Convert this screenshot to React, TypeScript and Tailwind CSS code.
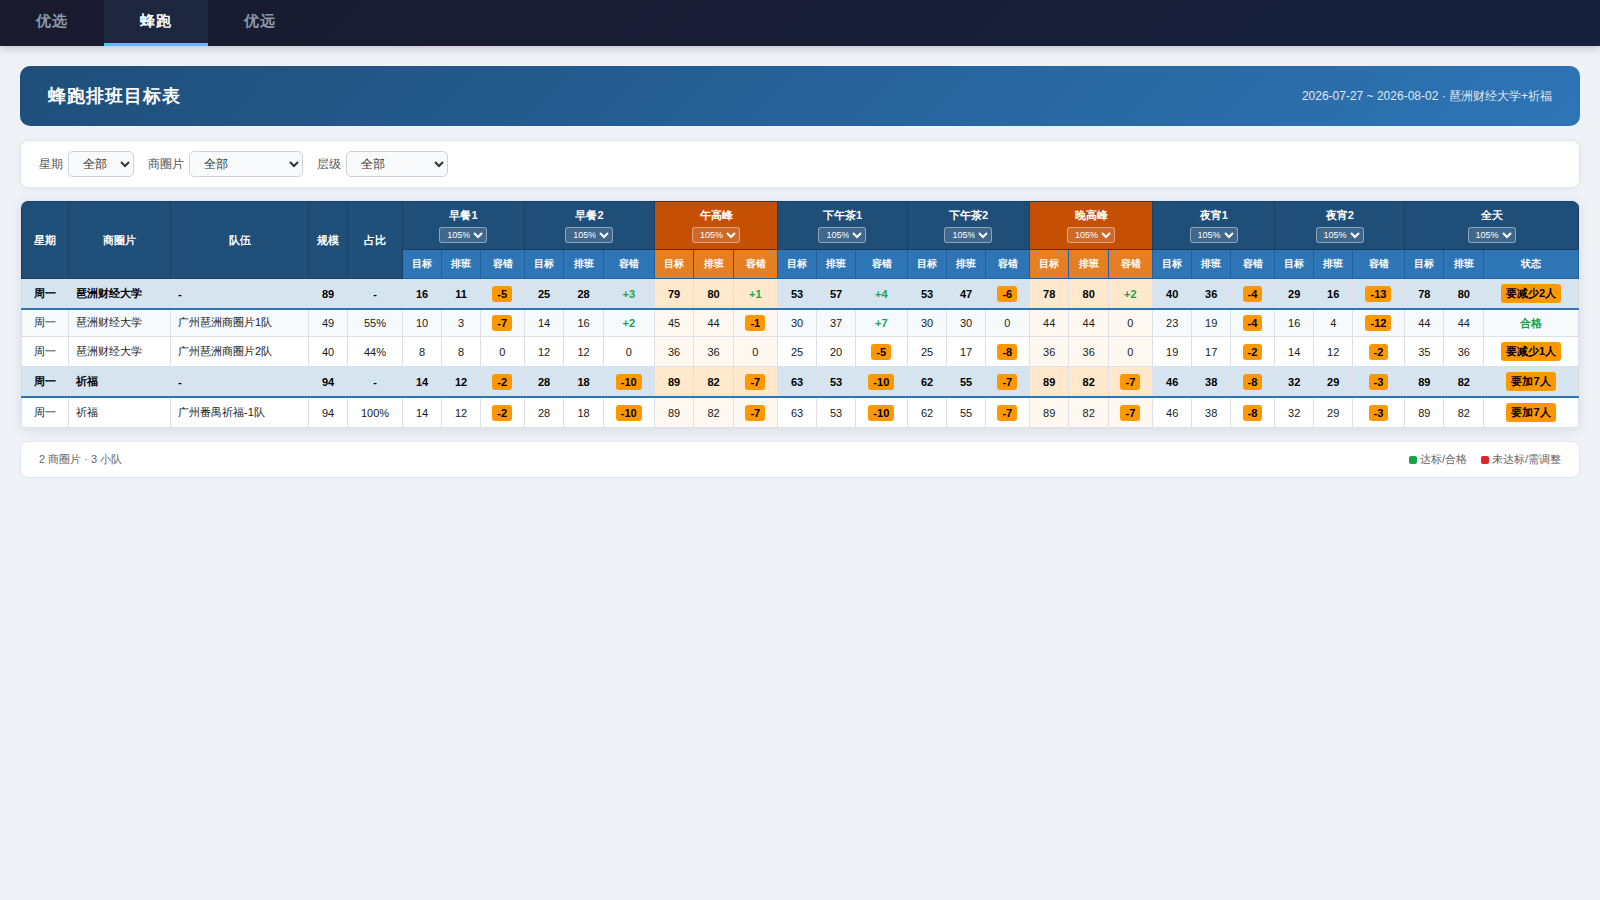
import React, { useState } from 'react';

type Cell = [number, number, number];

interface Row {
  day: string;
  area: string;
  team: string;
  size: number;
  ratio: string;
  slots: Cell[];
  total: [number, number];
  status: string;
  summary?: boolean;
  striped?: boolean;
}

const TABS = ['优选', '蜂跑', '优远'];

const SLOTS = ['早餐1', '早餐2', '午高峰', '下午茶1', '下午茶2', '晚高峰', '夜宵1', '夜宵2'];

const PEAK = [2, 5];

const COL_WIDTHS = [
  47, 102, 138, 39, 55,
  39, 39, 44,
  39, 40, 51,
  39, 40, 44,
  39, 39, 52,
  39, 39, 44,
  39, 40, 44,
  39, 39, 44,
  39, 39, 52,
  39, 40, 95,
];

const ROWS: Row[] = [
  {
    day: '周一', area: '琶洲财经大学', team: '-', size: 89, ratio: '-', summary: true,
    slots: [[16, 11, -5], [25, 28, 3], [79, 80, 1], [53, 57, 4], [53, 47, -6], [78, 80, 2], [40, 36, -4], [29, 16, -13]],
    total: [78, 80], status: '要减少2人',
  },
  {
    day: '周一', area: '琶洲财经大学', team: '广州琶洲商圈片1队', size: 49, ratio: '55%', striped: true,
    slots: [[10, 3, -7], [14, 16, 2], [45, 44, -1], [30, 37, 7], [30, 30, 0], [44, 44, 0], [23, 19, -4], [16, 4, -12]],
    total: [44, 44], status: '合格',
  },
  {
    day: '周一', area: '琶洲财经大学', team: '广州琶洲商圈片2队', size: 40, ratio: '44%',
    slots: [[8, 8, 0], [12, 12, 0], [36, 36, 0], [25, 20, -5], [25, 17, -8], [36, 36, 0], [19, 17, -2], [14, 12, -2]],
    total: [35, 36], status: '要减少1人',
  },
  {
    day: '周一', area: '祈福', team: '-', size: 94, ratio: '-', summary: true,
    slots: [[14, 12, -2], [28, 18, -10], [89, 82, -7], [63, 53, -10], [62, 55, -7], [89, 82, -7], [46, 38, -8], [32, 29, -3]],
    total: [89, 82], status: '要加7人',
  },
  {
    day: '周一', area: '祈福', team: '广州番禺祈福-1队', size: 94, ratio: '100%',
    slots: [[14, 12, -2], [28, 18, -10], [89, 82, -7], [63, 53, -10], [62, 55, -7], [89, 82, -7], [46, 38, -8], [32, 29, -3]],
    total: [89, 82], status: '要加7人',
  },
];

const ROW_HEIGHTS = ['h-[30px]', 'h-[28px]', 'h-[30px]', 'h-[30px]', 'h-[31px]'];

const NUM_PADDING = ['pt-px', 'pt-0', 'pt-0', 'pt-px', 'pt-px'];

const Filter: React.FC<{ label: string; width: string }> = ({ label, width }) => (
  <label className="flex items-center gap-[5px] text-xs text-[#555]">
    {label}
    <select className={`${width} h-[26px] rounded-[5px] border border-[#ccd3e0] bg-[#f9fafc] px-2.5 text-xs text-[#333]`}>
      <option>全部</option>
    </select>
  </label>
);

const RateSelect: React.FC = () => (
  <div className="mt-[5px] flex h-4 justify-center pr-[0.4px]">
    <select className="h-4 w-12 rounded-[3px] border border-white/40 bg-white/15 pr-0 pl-[3px] text-[9px] leading-normal font-normal text-white">
      <option>105%</option>
    </select>
  </div>
);

const Badge: React.FC<{ children: React.ReactNode }> = ({ children }) => (
  <span className="inline-block rounded-[3px] bg-[#ff9800] px-[5px] py-0.5 align-middle font-bold text-black">{children}</span>
);

const Diff: React.FC<{ value: number }> = ({ value }) => {
  if (value < 0) return <Badge>{value}</Badge>;
  if (value > 0) return <span className="font-bold text-[#16a34a]">+{value}</span>;
  return <>0</>;
};

const App: React.FC = () => {
  const [tab, setTab] = useState('蜂跑');

  const headCell = 'border border-[#1a3f62] bg-[#1f4e79] p-0 font-bold';

  return (
    <div className="min-h-screen bg-[#eef1f6] font-['Liberation_Sans',sans-serif] text-[#1a1a1a]">
      <nav className="relative flex h-[46px] bg-[linear-gradient(135deg,#1a1a2e,#16213e)] shadow-[0_2px_8px_rgba(0,0,0,0.2)]">
        {TABS.map((name) => (
          <button
            key={name}
            onClick={() => setTab(name)}
            className={`h-[46px] w-[104px] border-b-[3px] text-[15px] font-bold tracking-[1px] ${
              tab === name ? 'border-[#4fc3f7] bg-[#4fc3f7]/8 text-white' : 'border-transparent text-[#8899aa]'
            }`}
          >
            {name}
          </button>
        ))}
      </nav>

      <main className="px-5 pt-5">
        <header className="mb-3.5 flex h-[60px] items-center justify-between rounded-[10px] bg-[linear-gradient(135deg,#1f4e79,#2e75b6)] px-7 text-white">
          <h1 className="text-lg font-bold tracking-[1px]">蜂跑排班目标表</h1>
          <div className="text-xs opacity-85">2026-07-27 ~ 2026-08-02 · 琶洲财经大学+祈福</div>
        </header>

        <section className="mb-3 flex h-12 items-center gap-3.5 rounded-lg border border-[#e2e6ee] bg-white px-[18px] shadow-[0_1px_4px_rgba(0,0,0,0.05)]">
          <Filter label="星期" width="w-[66px]" />
          <Filter label="商圈片" width="w-[114px]" />
          <Filter label="层级" width="w-[102px]" />
        </section>

        <section className="mb-3 overflow-hidden rounded-lg border border-[#e2e6ee] bg-white shadow-[0_2px_12px_rgba(0,0,0,0.08)]">
          <table className="w-full table-fixed border-collapse text-center text-[11px] leading-[normal]">
            <colgroup>
              {COL_WIDTHS.map((w, i) => (
                <col key={i} style={{ width: w }} />
              ))}
            </colgroup>
            <thead className="text-white">
              <tr className="h-12">
                {['星期', '商圈片', '队伍', '规模', '占比'].map((name) => (
                  <th key={name} rowSpan={2} className={headCell}>{name}</th>
                ))}
                {[...SLOTS, '全天'].map((name, i) => (
                  <th
                    key={name}
                    colSpan={3}
                    className={PEAK.includes(i) ? 'border border-[#1a3f62] bg-[#c55004] p-0 font-bold' : headCell}
                  >
                    <div className="h-[14px] leading-[14px]">{name}</div>
                    <RateSelect />
                  </th>
                ))}
              </tr>
              <tr className="h-[29px] text-[10px]">
                {[...SLOTS, '全天'].map((name, i) =>
                  ['目标', '排班', name === '全天' ? '状态' : '容错'].map((sub) => (
                    <th
                      key={name + sub}
                      className={`border border-[#1f5f9f] p-0 font-bold ${PEAK.includes(i) ? 'bg-[#e67e22]' : 'bg-[#2e75b6]'}`}
                    >
                      {sub}
                    </th>
                  ))
                )}
              </tr>
            </thead>
            <tbody>
              {ROWS.map((row, r) => {
                const line = row.summary ? 'border border-[#dce1e9] border-b-2 border-b-[#2e75b6]' : 'border border-[#dce1e9]';
                const base = row.summary ? 'bg-[#d6e4f0]' : row.striped ? 'bg-[#f7fafd]' : 'bg-white';
                const peak = row.summary ? 'bg-[#ffe8cc]' : 'bg-[#fff8f0]';
                const pad = `p-0 ${NUM_PADDING[r]}`;
                return (
                  <tr key={r} className={`${ROW_HEIGHTS[r]} ${row.summary ? 'font-bold text-black' : ''}`}>
                    <td className={`${line} ${base} p-0`}>{row.day}</td>
                    <td className={`${line} ${base} p-0 pl-[7px] text-left`}>{row.area}</td>
                    <td className={`${line} ${base} p-0 pl-[7px] text-left ${row.team === '-' ? 'pt-px' : ''}`}>{row.team}</td>
                    <td className={`${line} ${base} ${pad}`}>{row.size}</td>
                    <td className={`${line} ${base} ${pad}`}>{row.ratio}</td>
                    {row.slots.map(([target, actual, diff], i) => {
                      const bg = PEAK.includes(i) ? peak : base;
                      return (
                        <React.Fragment key={i}>
                          <td className={`${line} ${bg} ${pad}`}>{target}</td>
                          <td className={`${line} ${bg} ${pad}`}>{actual}</td>
                          <td className={`${line} ${bg} ${pad} pr-[0.6px]`}><Diff value={diff} /></td>
                        </React.Fragment>
                      );
                    })}
                    <td className={`${line} ${base} ${pad}`}>{row.total[0]}</td>
                    <td className={`${line} ${base} ${pad}`}>{row.total[1]}</td>
                    <td className={`${line} ${base} p-0 pr-[0.6px]`}>
                      {row.status === '合格' ? (
                        <div className="pt-px font-bold text-[#16a34a]">{row.status}</div>
                      ) : (
                        <Badge>{row.status}</Badge>
                      )}
                    </td>
                  </tr>
                );
              })}
            </tbody>
          </table>
        </section>

        <footer className="flex h-[37px] items-center justify-between rounded-lg border border-[#e2e6ee] bg-white px-[18px] text-[11px] text-[#666]">
          <span>2 商圈片 · 3 小队</span>
          <div className="flex gap-3.5">
            <span className="flex items-center gap-[3px]">
              <i className="size-2 rounded-[2px] bg-[#16a34a]" />
              达标/合格
            </span>
            <span className="flex items-center gap-[3px]">
              <i className="size-2 rounded-[2px] bg-[#dc2626]" />
              未达标/需调整
            </span>
          </div>
        </footer>
      </main>
    </div>
  );
};

export default App;
